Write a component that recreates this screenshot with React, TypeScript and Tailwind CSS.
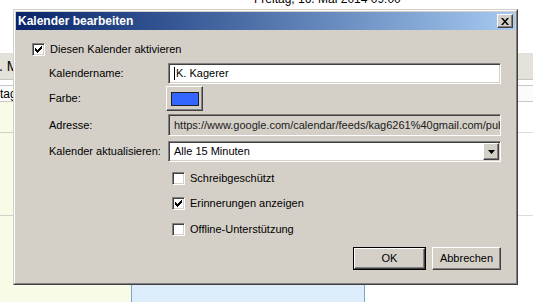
import * as React from 'react'

const sunken =
  'border border-t-[#808080] border-l-[#808080] border-r-white border-b-white shadow-[inset_1px_1px_0_#404040,inset_-1px_-1px_0_#d4d0c8]'
const raised =
  'border border-t-white border-l-white border-r-[#404040] border-b-[#404040] bg-[#d4d0c8] shadow-[inset_-1px_-1px_0_#808080]'

function CheckMark(): React.JSX.Element {
  return (
    <svg width="7" height="7" viewBox="0 0 7 7">
      <path d="M0 2h1v1h1v1h1v-1h1v-1h1v-1h1v-1h1v3h-1v1h-1v1h-1v1h-1v1h-1v-1h-1v-1h-1v-1h-1z" fill="#000" />
    </svg>
  )
}

function CheckBox({ checked }: { checked?: boolean }): React.JSX.Element {
  return (
    <span className={`flex h-[13px] w-[13px] shrink-0 items-center justify-center bg-white ${sunken}`}>
      {checked && <CheckMark />}
    </span>
  )
}

function CheckRow({ label, checked, className }: { label: string; checked?: boolean; className: string }): React.JSX.Element {
  return (
    <div className={`flex h-[13px] items-center gap-[5px] ${className}`}>
      <CheckBox checked={checked} />
      <span className="whitespace-nowrap leading-none">{label}</span>
    </div>
  )
}

function FieldRow({ label, className, children }: { label: string; className: string; children: React.ReactNode }): React.JSX.Element {
  return (
    <div className={`flex items-center ${className}`}>
      <span className="w-[136px] shrink-0 whitespace-nowrap pl-[17px] leading-none">{label}</span>
      <div className="flex h-full min-w-0 flex-1 items-center">{children}</div>
    </div>
  )
}

function CloseIcon(): React.JSX.Element {
  return (
    <svg width="8" height="7" viewBox="0 0 8 7">
      <path d="M0 0h2l2 2.5L6 0h2L5 3.5 8 7H6L4 4.5 2 7H0l3-3.5z" fill="#000" />
    </svg>
  )
}

function EditCalendarDialog(): React.JSX.Element {
  return (
    <div className="absolute left-[13px] top-[9px] h-[276px] w-[505px] border border-t-[#d4d0c8] border-l-[#d4d0c8] border-r-[#404040] border-b-[#404040] bg-[#d4d0c8]">
      <div className="h-full border border-t-white border-l-white border-r-[#808080] border-b-[#808080] p-px">
        <div className="flex h-[18px] items-center justify-between bg-gradient-to-r from-[#0a246a] to-[#a6caf0] pl-[2px] pr-[2px]">
          <span className="text-[12px] font-bold leading-none text-white">Kalender bearbeiten</span>
          <button className={`flex h-[14px] w-[16px] items-center justify-center ${raised}`}>
            <CloseIcon />
          </button>
        </div>

        <div className="flex flex-col pl-[16px] pr-[14px] text-[11px] text-black">
          <CheckRow label="Diesen Kalender aktivieren" checked className="mt-[13px]" />

          <FieldRow label="Kalendername:" className="mt-[7px] h-[21px]">
            <div className={`flex h-full w-full items-center bg-white pl-[5px] ${sunken}`}>
              <span className="mr-px h-[13px] w-px bg-black" />
              <span className="leading-none">K. Kagerer</span>
            </div>
          </FieldRow>

          <FieldRow label="Farbe:" className="mt-[2px] h-[25px]">
            <button className={`-ml-[2px] flex h-full w-[37px] items-start pl-[4px] pt-[5px] ${raised}`}>
              <span className="h-[14px] w-[28px] border border-[#202020] bg-[#3366ff]" />
            </button>
          </FieldRow>

          <FieldRow label="Adresse:" className="mt-[3px] h-[22px]">
            <div className={`flex h-full w-full items-center overflow-hidden whitespace-nowrap bg-[#d4d0c8] pl-[5px] text-[#202020] ${sunken}`}>
              <span className="leading-none">https://www.google.com/calendar/feeds/kag6261%40gmail.com/public/basic</span>
            </div>
          </FieldRow>

          <FieldRow label="Kalender aktualisieren:" className="mt-[5px] h-[21px]">
            <div className={`flex h-full w-full items-center justify-between bg-white pl-[5px] pr-px ${sunken}`}>
              <span className="leading-none">Alle 15 Minuten</span>
              <span className={`flex h-[17px] w-[16px] items-center justify-center ${raised}`}>
                <svg width="7" height="4" viewBox="0 0 7 4">
                  <path d="M0 0h7L3.5 4z" fill="#000" />
                </svg>
              </span>
            </div>
          </FieldRow>

          <CheckRow label="Schreibgeschützt" className="mt-[10px] pl-[140px]" />
          <CheckRow label="Erinnerungen anzeigen" checked className="mt-[12px] pl-[140px]" />
          <CheckRow label="Offline-Unterstützung" className="mt-[13px] pl-[140px]" />

          <div className="mt-[11px] flex justify-end gap-[6px]">
            <div className="border border-black">
              <button className={`flex h-[21px] w-[71px] items-center justify-center leading-none ${raised}`}>OK</button>
            </div>
            <button className={`flex h-[23px] w-[69px] items-center justify-center leading-none ${raised}`}>Abbrechen</button>
          </div>
        </div>
      </div>
    </div>
  )
}

export default function App(): React.JSX.Element {
  return (
    <div className="relative h-[302px] w-[533px] overflow-hidden bg-white font-['Liberation_Sans',Arial,sans-serif] text-black">
      <div className="h-[61px]">
        <div className="-mt-[8px] whitespace-nowrap pl-[254px] text-[12px] leading-[14px]">Freitag, 16. Mai 2014 09:00</div>
      </div>

      <div className="flex h-[27px] items-center border-b border-[#c8c5bd] bg-[#e4e1da] text-[14px]">
        <span className="-ml-[1px] whitespace-nowrap">. Mai 2014</span>
      </div>

      <div className="h-[5px]" />

      <div className="flex h-[17px] items-center border-t border-b border-[#c8c8c8] bg-[#fbfbfb] text-[12px]">
        <span className="whitespace-nowrap">tag</span>
      </div>

      <div className="grid h-[200px] grid-cols-[131px_234px_1fr]">
        <div className="flex flex-col bg-[#f8fbe6]">
          <div className="h-[31px] border-b border-[#d0d0c8]" />
          <div className="h-[83px] border-b border-[#d0d0c8]" />
        </div>
        <div className="flex flex-col border-l border-r border-[#7aa6cc] bg-[#deedfb]">
          <div className="h-[31px] border-b border-[#c6d8ea]" />
          <div className="h-[83px] border-b border-[#c6d8ea]" />
        </div>
        <div className="flex flex-col bg-white">
          <div className="h-[31px] border-b border-[#dcdcdc]" />
          <div className="h-[83px] border-b border-[#dcdcdc]" />
        </div>
      </div>

      <EditCalendarDialog />
    </div>
  )
}
